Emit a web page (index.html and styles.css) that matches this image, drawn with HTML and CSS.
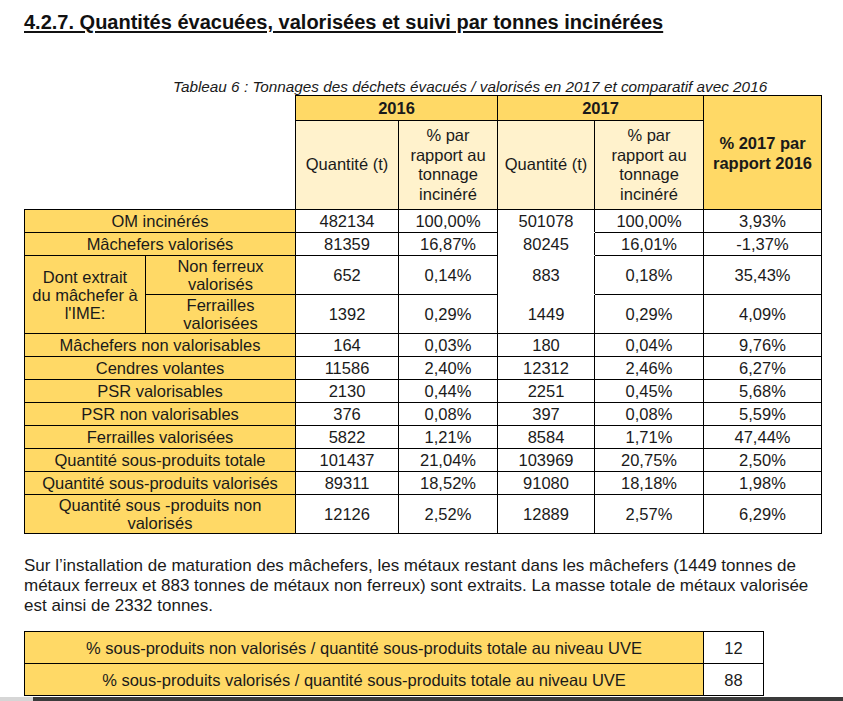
FILE: index.html
```html
<!DOCTYPE html>
<html lang="fr">
<head>
<meta charset="utf-8">
<title>4.2.7. Quantités évacuées</title>
<link rel="stylesheet" href="styles.css">
</head>
<body>
<div class="page">
  <h1 class="title">4.2.7. Quantités évacuées, valorisées et suivi par tonnes incinérées</h1>
  <p class="caption">Tableau 6 : Tonnages des déchets évacués / valorisés en 2017 et comparatif avec 2016</p>
  <table class="main">
    <colgroup>
      <col class="c-l1"><col class="c-l2"><col class="c-q16"><col class="c-p16"><col class="c-q17"><col class="c-p17"><col class="c-last">
    </colgroup>
    <thead>
      <tr class="h1">
        <th class="blank" colspan="2" rowspan="2"></th>
        <th class="year" colspan="2">2016</th>
        <th class="year" colspan="2">2017</th>
        <th class="delta" rowspan="2">% 2017 par<br>rapport 2016</th>
      </tr>
      <tr class="h2">
        <th class="sub">Quantité (t)</th>
        <th class="sub">% par<br>rapport au<br>tonnage<br>incinéré</th>
        <th class="sub">Quantité (t)</th>
        <th class="sub">% par<br>rapport au<br>tonnage<br>incinéré</th>
      </tr>
    </thead>
    <tbody>
      <tr><td class="lab" colspan="2">OM incinérés</td><td>482134</td><td>100,00%</td><td class="nb-b">501078</td><td>100,00%</td><td>3,93%</td></tr>
      <tr><td class="lab" colspan="2">Mâchefers valorisés</td><td>81359</td><td>16,87%</td><td class="nb-tb">80245</td><td>16,01%</td><td>-1,37%</td></tr>
      <tr class="two"><td class="lab" rowspan="2">Dont extrait<br>du mâchefer à<br>l'IME:</td><td class="lab">Non ferreux<br>valorisés</td><td>652</td><td>0,14%</td><td class="nb-tb">883</td><td>0,18%</td><td>35,43%</td></tr>
      <tr class="two"><td class="lab">Ferrailles<br>valorisées</td><td>1392</td><td>0,29%</td><td class="nb-t">1449</td><td>0,29%</td><td>4,09%</td></tr>
      <tr><td class="lab" colspan="2">Mâchefers non valorisables</td><td>164</td><td>0,03%</td><td>180</td><td>0,04%</td><td>9,76%</td></tr>
      <tr><td class="lab" colspan="2">Cendres volantes</td><td>11586</td><td>2,40%</td><td>12312</td><td>2,46%</td><td>6,27%</td></tr>
      <tr><td class="lab" colspan="2">PSR valorisables</td><td>2130</td><td>0,44%</td><td>2251</td><td>0,45%</td><td>5,68%</td></tr>
      <tr><td class="lab" colspan="2">PSR non valorisables</td><td>376</td><td>0,08%</td><td>397</td><td>0,08%</td><td>5,59%</td></tr>
      <tr><td class="lab" colspan="2">Ferrailles valorisées</td><td>5822</td><td>1,21%</td><td>8584</td><td>1,71%</td><td>47,44%</td></tr>
      <tr><td class="lab" colspan="2">Quantité sous-produits totale</td><td>101437</td><td>21,04%</td><td>103969</td><td>20,75%</td><td>2,50%</td></tr>
      <tr><td class="lab" colspan="2">Quantité sous-produits valorisés</td><td>89311</td><td>18,52%</td><td>91080</td><td>18,18%</td><td>1,98%</td></tr>
      <tr class="two"><td class="lab" colspan="2">Quantité sous -produits non<br>valorisés</td><td>12126</td><td>2,52%</td><td>12889</td><td>2,57%</td><td>6,29%</td></tr>
    </tbody>
  </table>
  <p class="para">Sur l’installation de maturation des mâchefers, les métaux restant dans les mâchefers (1449 tonnes de métaux ferreux et 883 tonnes de métaux non ferreux) sont extraits. La masse totale de métaux valorisée est ainsi de 2332 tonnes.</p>
  <table class="summary">
    <colgroup><col class="s-lab"><col class="s-val"></colgroup>
    <tr><td class="lab">% sous-produits non valorisés / quantité sous-produits totale au niveau UVE</td><td>12</td></tr>
    <tr><td class="lab">% sous-produits valorisés / quantité sous-produits totale au niveau UVE</td><td>88</td></tr>
  </table>
</div>
<div class="edge"><span class="edge-l"></span><span class="edge-r"></span></div>
</body>
</html>
```
FILE: styles.css
```css
html, body {
  margin: 0;
  padding: 0;
  background: #ffffff;
}
body {
  font-family: "Liberation Sans", Arial, sans-serif;
  color: #1a1a1a;
  width: 843px;
  height: 701px;
  overflow: hidden;
  display: flex;
  flex-direction: column;
}
.page {
  padding: 0 0 0 24px;
  flex: 1;
}
.title {
  margin: 0;
  padding-top: 11px;
  font-size: 20px;
  line-height: 22px;
  font-weight: bold;
  text-decoration: underline;
  text-underline-offset: 2px;
  color: #111;
}
.caption {
  margin: 0;
  padding-top: 45px;
  padding-left: 149px;
  font-size: 15.3px;
  line-height: 17px;
  font-style: italic;
  color: #1a1a1a;
}
table {
  border-collapse: collapse;
  table-layout: fixed;
  font-size: 16.5px;
}
.main {
  width: 797px;
  margin-top: 0;
}
.c-l1 { width: 121px; }
.c-l2 { width: 150px; }
.c-q16 { width: 103px; }
.c-p16 { width: 99px; }
.c-q17 { width: 97px; }
.c-p17 { width: 109px; }
.c-last { width: 118px; }
th, td {
  border: 1px solid #000;
  text-align: center;
  vertical-align: middle;
  padding: 2px 2px;
  line-height: 18px;
  font-weight: normal;
}
.main td { height: 17.5px; }
.main tr.two td { height: 36px; padding-top: 1px; padding-bottom: 1px; }
.h1 th { height: 22px; padding: 1px 2px; }
.h1 .year {
  background: #FFD966;
  font-weight: bold;
}
.blank {
  border: none;
  border-right: 1px solid #000;
  border-bottom: 1px solid #000;
  background: #fff;
}
.delta {
  background: #FFD966;
  font-weight: bold;
  line-height: 20px;
  padding: 0 2px;
}
.h2 .sub {
  background: #FFF2CC;
  height: 84px;
  line-height: 19.5px;
  padding: 2px 2px;
}
td.lab {
  background: #FFD966;
}
.nb-b { border-bottom-color: #fff; }
.nb-t { border-top-color: #fff; }
.nb-tb { border-top-color: #fff; border-bottom-color: #fff; }
.para {
  margin: 0;
  padding-top: 22px;
  width: 800px;
  font-size: 17px;
  line-height: 20px;
  color: #1a1a1a;
}
.summary {
  margin-top: 15px;
  width: 739px;
}
.s-lab { width: 679px; }
.s-val { width: 60px; }
.summary td {
  height: 27px;
  padding: 2px 3px;
}
.edge {
  display: flex;
  height: 4px;
  flex: none;
}
.edge-l { width: 33px; background: #d6d6d6; }
.edge-r { flex: 1; background: #3b3b3b; }
```
